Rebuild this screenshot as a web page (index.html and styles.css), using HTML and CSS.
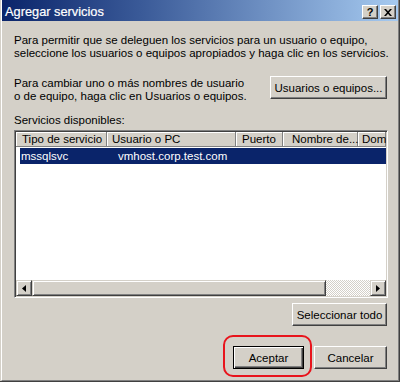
FILE: index.html
```html
<!DOCTYPE html>
<html lang="es">
<head>
<meta charset="utf-8">
<title>Agregar servicios</title>
<link rel="stylesheet" href="styles.css">
</head>
<body>
<div class="window">
  <div class="frame">
    <div class="titlebar">
      <span class="title">Agregar servicios</span>
      <div class="tbtns">
        <span class="tbtn help">?</span>
        <span class="tbtn close"><svg width="8" height="7" viewBox="0 0 8 7"><path d="M0 0h2l2 2.2L6 0h2L5 3.5 8 7H6L4 4.8 2 7H0l3-3.5z" fill="#000"/></svg></span>
      </div>
    </div>
    <div class="content">
      <p class="intro">Para permitir que se deleguen los servicios para un usuario o equipo,<br>seleccione los usuarios o equipos apropiados y haga clic en los servicios.</p>
      <div class="change-row">
        <p class="change-text">Para cambiar uno o más nombres de usuario<br>o de equipo, haga clic en Usuarios o equipos.</p>
        <button class="btn btn-users">Usuarios o equipos...</button>
      </div>
      <div class="label">Servicios disponibles:</div>
      <div class="list">
        <div class="list-header">
          <span class="hcell col-tipo">Tipo de servicio</span>
          <span class="hcell col-user">Usuario o PC</span>
          <span class="hcell col-port">Puerto</span>
          <span class="hcell col-name">Nombre de...</span>
          <span class="hcell col-dom">Dom</span>
        </div>
        <div class="list-body">
          <div class="row selected">
            <span class="cell cell-tipo">mssqlsvc</span>
            <span class="cell cell-user">vmhost.corp.test.com</span>
          </div>
        </div>
        <div class="hscroll">
          <span class="sbtn"><svg width="4" height="7" viewBox="0 0 4 7"><path d="M4 0v7L0 3.5z" fill="#000"/></svg></span>
          <span class="thumb"></span>
          <span class="track"></span>
          <span class="sbtn"><svg width="4" height="7" viewBox="0 0 4 7"><path d="M0 0v7l4-3.5z" fill="#000"/></svg></span>
        </div>
      </div>
      <div class="select-row">
        <button class="btn btn-select">Seleccionar todo</button>
      </div>
      <div class="actions">
        <div class="ok-wrap">
          <button class="btn btn-default btn-ok">Aceptar</button>
          <span class="highlight"></span>
        </div>
        <button class="btn btn-cancel">Cancelar</button>
      </div>
    </div>
  </div>
</div>
</body>
</html>
```
FILE: styles.css
```css
* { box-sizing: border-box; }
html, body { margin: 0; padding: 0; }
body {
  width: 400px;
  height: 382px;
  overflow: hidden;
  font-family: "Liberation Sans", Arial, sans-serif;
  font-size: 11.5px;
  color: #000;
  background: #d4d0c8;
}
.window {
  width: 400px;
  height: 382px;
  padding-left: 1px;
  background: #d4d0c8;
  border-right: 1px solid #404040;
  border-bottom: 1px solid #404040;
}
.frame {
  height: 100%;
  border-left: 1px solid #fff;
  border-right: 1px solid #808080;
  border-bottom: 1px solid #808080;
  display: flex;
  flex-direction: column;
}
.titlebar {
  height: 21px;
  flex-shrink: 0;
  display: flex;
  justify-content: space-between;
  align-items: flex-start;
  background: linear-gradient(to right, #0a246a 0%, #3a5a98 35%, #a6caf0 100%);
  color: #fff;
}
.title {
  font-size: 12.8px;
  line-height: 21px;
  padding: 1px 0 0 3px;
  -webkit-text-stroke: 0.2px #fff;
}
.tbtns {
  display: flex;
  gap: 2px;
  padding-top: 5px;
  margin-right: 2px;
}
.tbtn {
  width: 16px;
  height: 14px;
  background: #d4d0c8;
  border: 1px solid;
  border-color: #fff #404040 #404040 #fff;
  box-shadow: inset -1px -1px #808080;
  display: flex;
  align-items: center;
  justify-content: center;
  color: #000;
}
.help {
  font-weight: bold;
  font-size: 11px;
  line-height: 12px;
}
.content {
  flex: 1;
  padding: 13px 11px 0 12px;
  display: flex;
  flex-direction: column;
}
.intro, .change-text {
  margin: 0;
  line-height: 13px;
  white-space: nowrap;
}
.change-row {
  margin-top: 16px;
  display: flex;
  justify-content: space-between;
  align-items: flex-start;
}
.change-text { padding-top: 1px; }
.btn {
  font-family: "Liberation Sans", Arial, sans-serif;
  font-size: 11.5px;
  color: #000;
  height: 23px;
  padding: 0;
  white-space: nowrap;
  background: #d4d0c8;
  border: 1px solid;
  border-color: #fff #404040 #404040 #fff;
  box-shadow: inset -1px -1px #808080;
  border-radius: 0;
}
.btn-users { width: 117px; flex-shrink: 0; }
.label {
  margin-top: 11px;
  line-height: 13px;
}
.list {
  margin-top: 3px;
  margin-right: -1px;
  height: 168px;
  flex-shrink: 0;
  border: 1px solid;
  border-color: #808080 #fff #fff #808080;
  padding: 1px;
  box-shadow: inset 1px 1px #404040, inset -1px -1px #d4d0c8;
  background: #fff;
  display: flex;
  flex-direction: column;
  overflow: hidden;
}
.list-header {
  height: 15px;
  flex-shrink: 0;
  display: flex;
  overflow: hidden;
  background: #d4d0c8;
}
.hcell {
  flex-shrink: 0;
  height: 15px;
  line-height: 15px;
  white-space: nowrap;
  overflow: hidden;
  background: #d4d0c8;
  box-shadow: inset -1px -1px #808080, inset 1px 1px #fff;
}
.col-tipo { width: 91px; padding-left: 6px; }
.col-user { width: 129px; padding-left: 5px; }
.col-port { width: 47px; padding-left: 6px; }
.col-name { width: 75px; padding-left: 9px; }
.col-dom { flex: 1; flex-shrink: 1; padding-left: 4px; }
.list-body {
  flex: 1;
  background: #fff;
}
.row {
  margin: 1px 0 0 4px;
  height: 16px;
  line-height: 16px;
  display: flex;
  white-space: nowrap;
}
.row.selected {
  background: #0a246a;
  color: #fff;
}
.cell-tipo { width: 98px; padding-left: 1px; }
.hscroll {
  height: 16px;
  flex-shrink: 0;
  display: flex;
}
.sbtn, .thumb {
  height: 16px;
  background: #d4d0c8;
  border: 1px solid;
  border-color: #d4d0c8 #404040 #404040 #d4d0c8;
  box-shadow: inset 1px 1px #fff, inset -1px -1px #808080;
}
.sbtn {
  width: 16px;
  flex-shrink: 0;
  display: flex;
  align-items: center;
  justify-content: center;
}
.thumb {
  width: 294px;
  flex-shrink: 0;
}
.track {
  flex: 1;
  background: repeating-conic-gradient(#fff 0 25%, #d4d0c8 0 50%) 0 0 / 2px 2px;
}
.select-row {
  margin-top: 5px;
  display: flex;
  justify-content: flex-end;
}
.btn-select { width: 95px; }
.actions {
  margin-top: 20px;
  display: flex;
  justify-content: flex-end;
  gap: 10px;
}
.ok-wrap { position: relative; }
.btn-ok { width: 71px; display: block; }
.btn-default {
  border: 1px solid #000;
  box-shadow: inset 1px 1px #fff, inset -1px -1px #404040, inset -2px -2px #808080;
}
.btn-cancel { width: 73px; }
.highlight {
  position: absolute;
  left: -10px;
  top: -11px;
  width: 89px;
  height: 42px;
  border: 2px solid #e8141c;
  border-radius: 10px;
  pointer-events: none;
}
```
